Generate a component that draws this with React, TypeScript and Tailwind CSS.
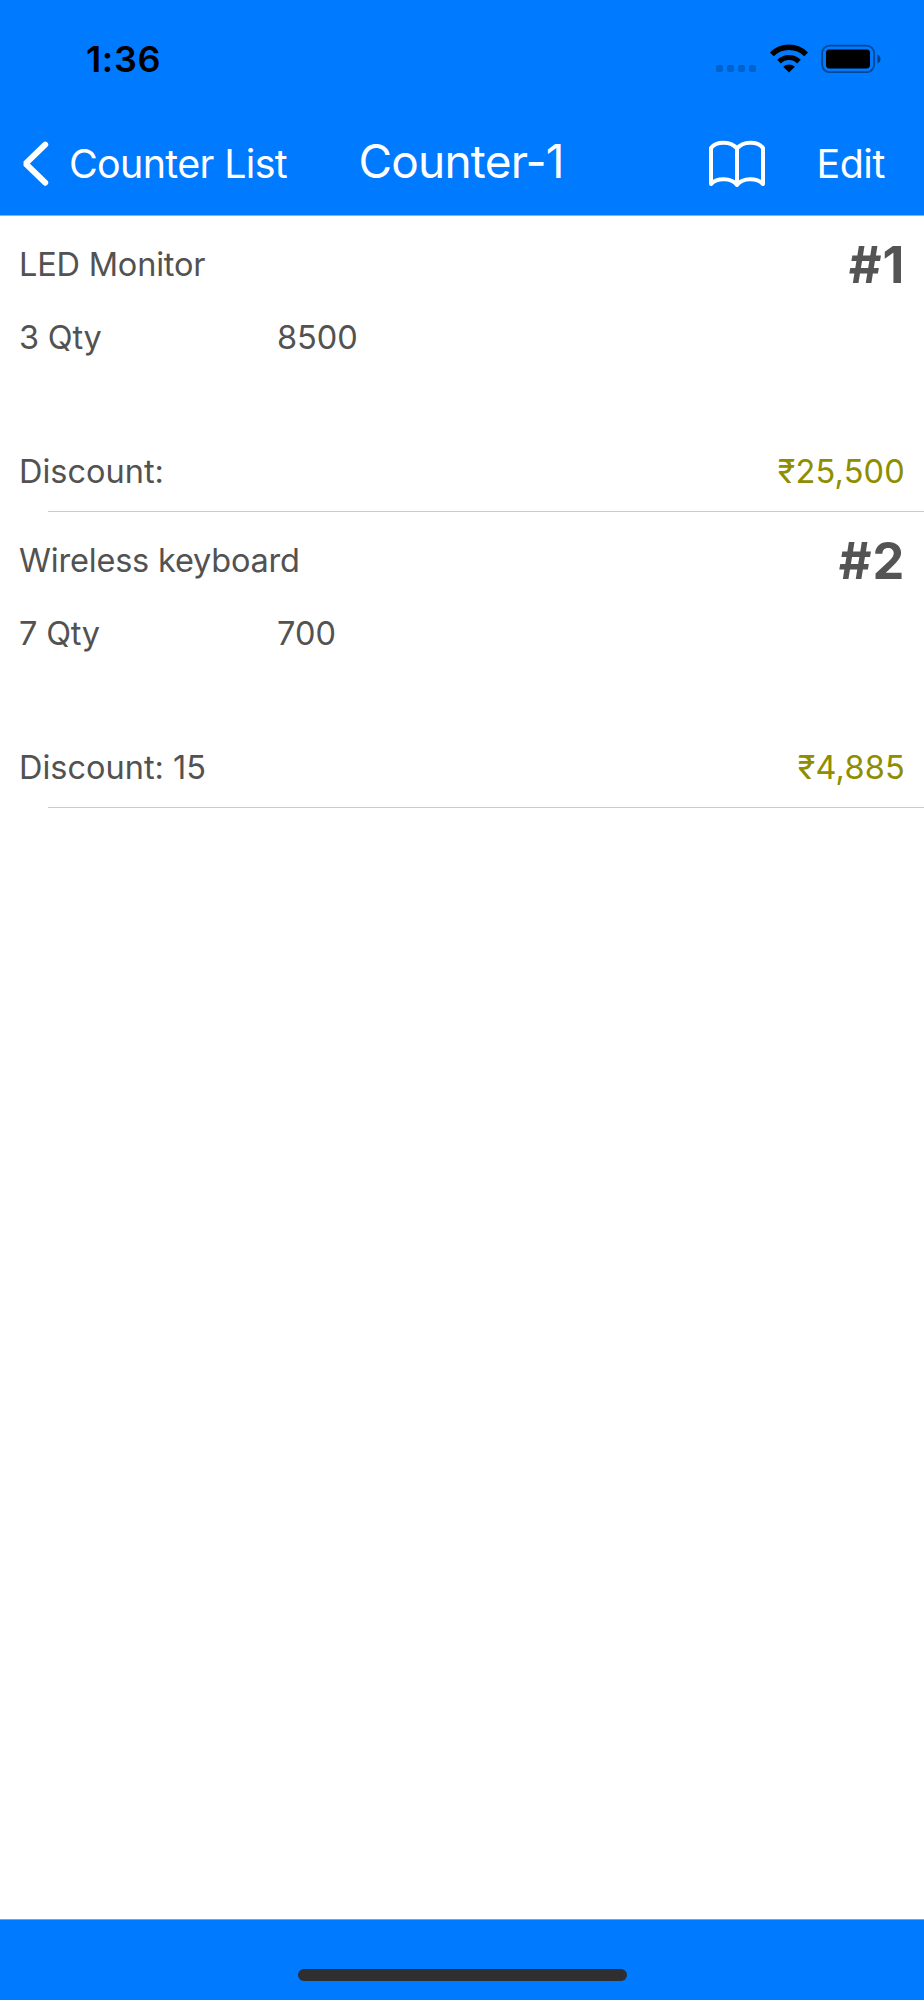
type Item = {
  name: string;
  index: string;
  qty: string;
  price: string;
  discount: string;
  total: string;
};

const items: Item[] = [
  { name: "LED Monitor", index: "#1", qty: "3 Qty", price: "8500", discount: "Discount:", total: "₹25,500" },
  { name: "Wireless keyboard", index: "#2", qty: "7 Qty", price: "700", discount: "Discount: 15", total: "₹4,885" },
];

function WifiIcon() {
  return (
    <svg className="ml-[13px] h-[29px] w-[38px]" viewBox="0 0 38 29" fill="none">
      <path d="M1.8 10.4a24.4 24.4 0 0 1 34.4 0" stroke="#000" strokeWidth="5.4" />
      <path d="M9 17.6a14.2 14.2 0 0 1 20 0" stroke="#000" strokeWidth="5.2" />
      <path d="M19 28.6l-5.8-5.8a8.3 8.3 0 0 1 11.6 0z" fill="#000" />
    </svg>
  );
}

function BatteryIcon() {
  return (
    <svg className="ml-[13px] h-[29px] w-[60px]" viewBox="0 0 60 29" fill="none">
      <rect x="1.1" y="1.6" width="52" height="26.6" rx="7.6" stroke="#000" strokeOpacity="0.4" strokeWidth="1.9" />
      <rect x="5" y="5.4" width="44" height="19" rx="3.4" fill="#000" />
      <path d="M56.4 10.4c2 .8 3.1 2.4 3.1 4.5s-1.1 3.7-3.1 4.5z" fill="#000" fillOpacity="0.45" />
    </svg>
  );
}

function SignalDots() {
  return (
    <div className="mr-px mb-px flex gap-1">
      <span className="size-[7px] rounded-[2px] bg-black/20" />
      <span className="size-[7px] rounded-[2px] bg-black/20" />
      <span className="size-[7px] rounded-[2px] bg-black/20" />
      <span className="size-[7px] rounded-[2px] bg-black/20" />
    </div>
  );
}

function ChevronLeftIcon() {
  return (
    <svg className="h-[46px] w-[27px]" viewBox="0 0 27 46" fill="none">
      <path
        d="M23.2 3.7L3.6 22.7l19.6 19"
        stroke="#fff"
        strokeWidth="6"
        strokeLinecap="round"
        strokeLinejoin="bevel"
      />
    </svg>
  );
}

function BookIcon() {
  return (
    <svg
      className="h-[48px] w-[56px]"
      viewBox="0 0 56 48"
      fill="none"
      stroke="#fff"
      strokeWidth="4"
      strokeLinejoin="round"
    >
      <path d="M28 8.6C22 .8 7.500.9 2 7.900V44c6-6.300 20-6.500 26 .900C34 37.500 48 37.700 54 44V7.900C48.500.900 34 .8 28 8.600zV44.900" />
    </svg>
  );
}

function ItemRow({ item }: { item: Item }) {
  return (
    <li>
      <div className="h-[295px] px-[19px] pt-[19px] text-[32.5px] leading-[40px] text-[#525252]">
        <div className="flex h-[60px] items-start justify-between">
          <span className="mt-[10px] tracking-[-0.2px]">{item.name}</span>
          <span className="text-[50.5px] leading-[60px] font-bold tracking-[0.8px] text-[#545454]">{item.index}</span>
        </div>
        <div className="mt-[23px] flex">
          <span className="w-[258px] tracking-[-0.2px]">{item.qty}</span>
          <span>{item.price}</span>
        </div>
        <div className="mt-[94px] flex justify-between">
          <span>{item.discount}</span>
          <span className="tracking-[0.2px] text-[#8e8e00]">{item.total}</span>
        </div>
      </div>
      <div className="ml-12 h-px bg-[#cbcbcc]" />
    </li>
  );
}

export default function App() {
  return (
    <div className="flex h-[2000px] w-[924px] flex-col bg-white font-['Inter',sans-serif]">
      <header className="h-[216px] border-b border-[#8db4e8] bg-[#007aff]">
        <div className="flex h-28 items-start justify-between pt-8 pr-[43px] pl-[86px]">
          <time className="text-[36px] leading-[54px] font-semibold tracking-[0.6px] text-black">1:36</time>
          <div className="mt-[12px] flex items-end">
            <SignalDots />
            <WifiIcon />
            <BatteryIcon />
          </div>
        </div>
        <nav className="flex h-[103px] items-center pr-[39px] pl-[22px] text-white">
          <button className="flex w-[336.5px] items-center gap-5 text-[39.4px] leading-[48px] tracking-[-0.65px]">
            <ChevronLeftIcon />
            Counter List
          </button>
          <h1 className="mb-[5px] text-[46px] leading-[56px] tracking-[-0.8px]">Counter-1</h1>
          <div className="ml-auto flex items-center gap-[51px]">
            <BookIcon />
            <button className="text-[39.4px] leading-[48px] tracking-[-0.4px]">Edit</button>
          </div>
        </nav>
      </header>
      <ul className="flex-1">
        {items.map((item) => (
          <ItemRow key={item.index} item={item} />
        ))}
      </ul>
      <footer className="flex h-[81px] flex-col items-center border-t border-[#5fa9fb] bg-[#007aff] pt-[49px]">
        <div className="h-3 w-[329px] rounded-full bg-[#2f2f2f]" />
      </footer>
    </div>
  );
}
